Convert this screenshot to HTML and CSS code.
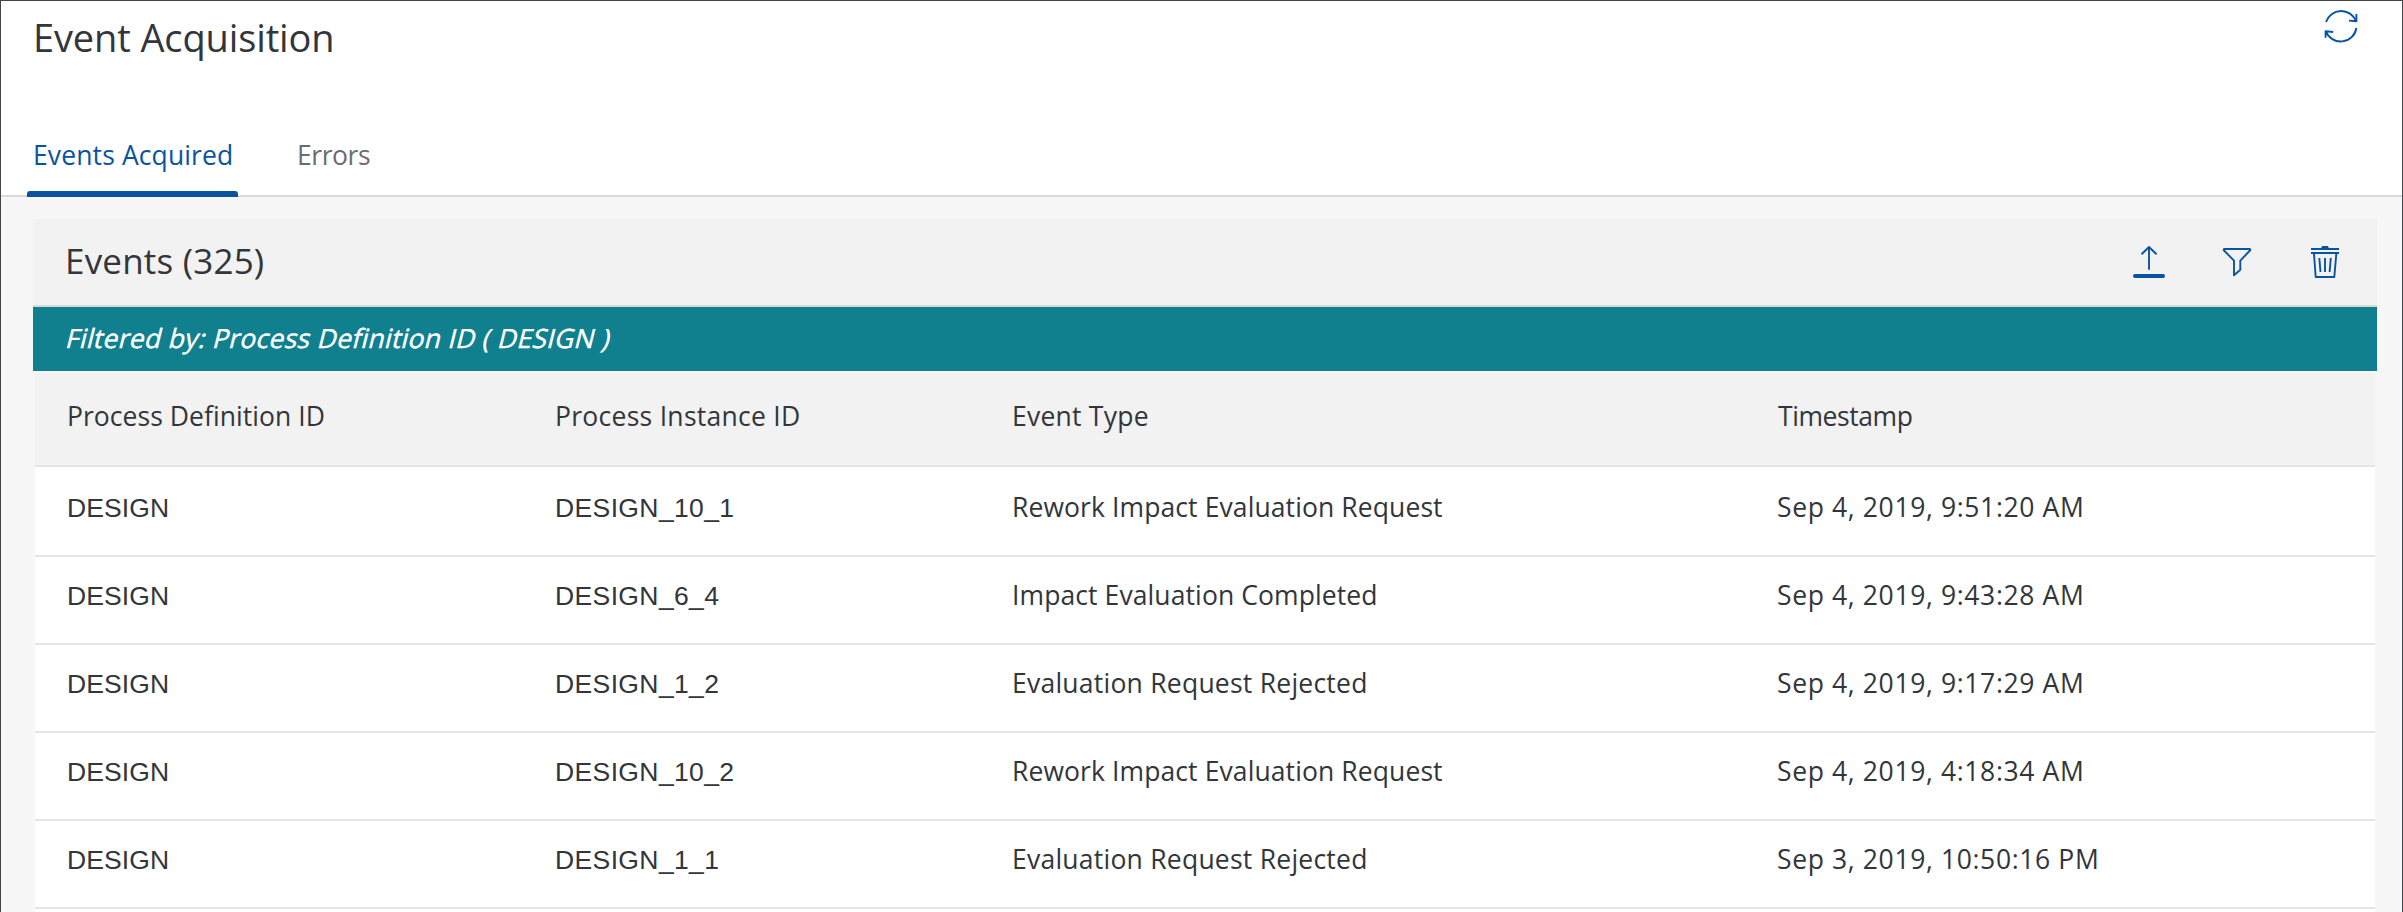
FILE: index.html
```html
<!DOCTYPE html>
<html lang="en">
<head>
<meta charset="utf-8">
<title>Event Acquisition</title>
<link rel="stylesheet" href="styles.css">
</head>
<body>
<div class="page">
  <header class="page-header">
    <h1 class="page-title">Event Acquisition</h1>
    <svg class="icon-refresh" viewBox="0 0 36 36">
      <path d="M3 14A15.9 15.9 0 0 1 33 13.2M33.4 6v7.3l-7.4-.7M33.4 20A15.9 15.9 0 0 1 2.8 23.2M2.6 29.8v-6.6l7.6.8"/>
    </svg>
  </header>
  <nav class="tabs">
    <a class="tab tab-active">Events Acquired</a>
    <a class="tab tab-errors">Errors</a>
  </nav>
  <main class="content">
    <div class="toolbar">
      <h2 class="toolbar-title">Events (325)</h2>
      <div class="actions">
        <svg class="icon" viewBox="0 0 32 32"><path d="M16 1v22.7M8.5 8.2L16 1l7.5 7.2"/><rect class="solid" y="28" width="32" height="4" rx="2"/></svg>
        <svg class="icon" viewBox="0 0 32 32"><path d="M3 3h26l.4 1-10.1 10.7v9.1L13 29.3V14.7L2.6 4z"/></svg>
        <svg class="icon" viewBox="0 0 32 32"><path d="M2 3h28M2 7h28M5 8l1.7 23h18.6L27.3 8M10.3 12l1.2 14M16 12v14M21.8 12l-1.2 14"/><path class="solid" d="M11.5 3l1.8-3h5.4l1.8 3z"/></svg>
      </div>
    </div>
    <div class="filter-bar"><span class="filter-text">Filtered by: Process Definition ID ( DESIGN )</span></div>
    <div class="table">
      <div class="row head"><span class="def-h">Process Definition ID</span><span class="inst-h">Process Instance ID</span><span class="type">Event Type</span><span class="time-h">Timestamp</span></div>
      <div class="row first"><span class="def">DESIGN</span><span class="inst">DESIGN_10_1</span><span class="phrase">Rework Impact Evaluation Request</span><span class="time">Sep 4, 2019, 9:51:20 AM</span></div>
      <div class="row"><span class="def">DESIGN</span><span class="inst">DESIGN_6_4</span><span class="phrase">Impact Evaluation Completed</span><span class="time">Sep 4, 2019, 9:43:28 AM</span></div>
      <div class="row"><span class="def">DESIGN</span><span class="inst">DESIGN_1_2</span><span class="type">Evaluation Request Rejected</span><span class="time">Sep 4, 2019, 9:17:29 AM</span></div>
      <div class="row"><span class="def">DESIGN</span><span class="inst">DESIGN_10_2</span><span class="phrase">Rework Impact Evaluation Request</span><span class="time">Sep 4, 2019, 4:18:34 AM</span></div>
      <div class="row"><span class="def">DESIGN</span><span class="inst">DESIGN_1_1</span><span class="type">Evaluation Request Rejected</span><span class="time">Sep 3, 2019, 10:50:16 PM</span></div>
      <div class="row"></div>
    </div>
  </main>
</div>
</body>
</html>
```
FILE: styles.css
```css
* { box-sizing: border-box; }
body { margin: 0; background: #fff; }
.page {
  display: flex;
  flex-direction: column;
  width: 2403px;
  height: 912px;
  overflow: hidden;
  border: 1px solid #444548;
  border-bottom: 0;
  color: #32363a;
  font: 26.5px/36px "Open Sans", "Noto Sans", sans-serif;
}
.page-header {
  display: flex;
  flex: none;
  justify-content: space-between;
  align-items: flex-start;
  height: 106px;
  padding: 7px 43px 0 32px;
}
.page-title {
  margin: 5px 0 0;
  font-size: 38px;
  font-weight: 400;
  line-height: 48px;
  letter-spacing: -.12px;
}
.icon-refresh { width: 36px; height: 36px; }
svg { fill: none; stroke: #0854a0; stroke-width: 1.9; stroke-linejoin: round; }
.solid { fill: #0854a0; stroke: none; }
.tabs {
  display: flex;
  flex: none;
  gap: 50px;
  height: 90px;
  padding-left: 26px;
  border-bottom: 2px solid #d9d9d9;
}
.tab {
  display: flex;
  flex-direction: column;
  justify-content: space-between;
  height: 90px;
  padding-top: 29px;
}
.tab-active { width: 211px; padding-top: 30px; color: #0854a0; letter-spacing: .12px; text-indent: 6px; }
.tab-active::after {
  content: "";
  height: 6px;
  background: #0854a0;
  border-radius: 3px 3px 0 0;
}
.tab-errors { padding-top: 30px; padding-left: 9px; color: #6a6d70; letter-spacing: -.43px; }
.content {
  flex: 1;
  padding: 22px 25px 0 32px;
  background: #f7f7f7;
}
.toolbar {
  display: flex;
  align-items: center;
  justify-content: space-between;
  height: 88px;
  padding: 0 36px 0 32px;
  background: #f2f2f2;
  border-bottom: 2px solid #d9d9d9;
}
.toolbar-title {
  margin: 0 0 3px;
  font-size: 35px;
  font-weight: 400;
  line-height: 44px;
  letter-spacing: .2px;
}
.actions { display: flex; gap: 56px; }
.icon { width: 32px; height: 32px; overflow: visible; }
.filter-bar {
  height: 64px;
  margin-bottom: 2px;
  padding: 13px 0 0 34px;
  background: #10808f;
  color: #fff;
}
.filter-text {
  display: inline-block;
  transform: skewX(-14deg);
  letter-spacing: .27px;
  -webkit-text-stroke: .4px #fff;
}
.table { margin: 0 2px; background: #fff; }
.row {
  display: grid;
  grid-template-columns: 488px 457px 765px 1fr;
  height: 88px;
  padding: 20px 0 0 32px;
  border-bottom: 2px solid #e5e5e5;
  white-space: nowrap;
}
.head { height: 94px; padding-top: 25px; background: #f2f2f2; }
.first { height: 90px; padding-top: 22px; }
.def, .inst { padding-top: 1px; font-family: "Liberation Sans", Arial, sans-serif; }
.def { letter-spacing: .11px; }
.def-h { letter-spacing: .05px; }
.inst { letter-spacing: .38px; }
.inst-h { letter-spacing: .28px; }
.type { letter-spacing: .24px; }
.phrase { letter-spacing: .1px; }
.time { letter-spacing: .63px; }
.time-h { padding-left: 1px; letter-spacing: -.42px; }
```
